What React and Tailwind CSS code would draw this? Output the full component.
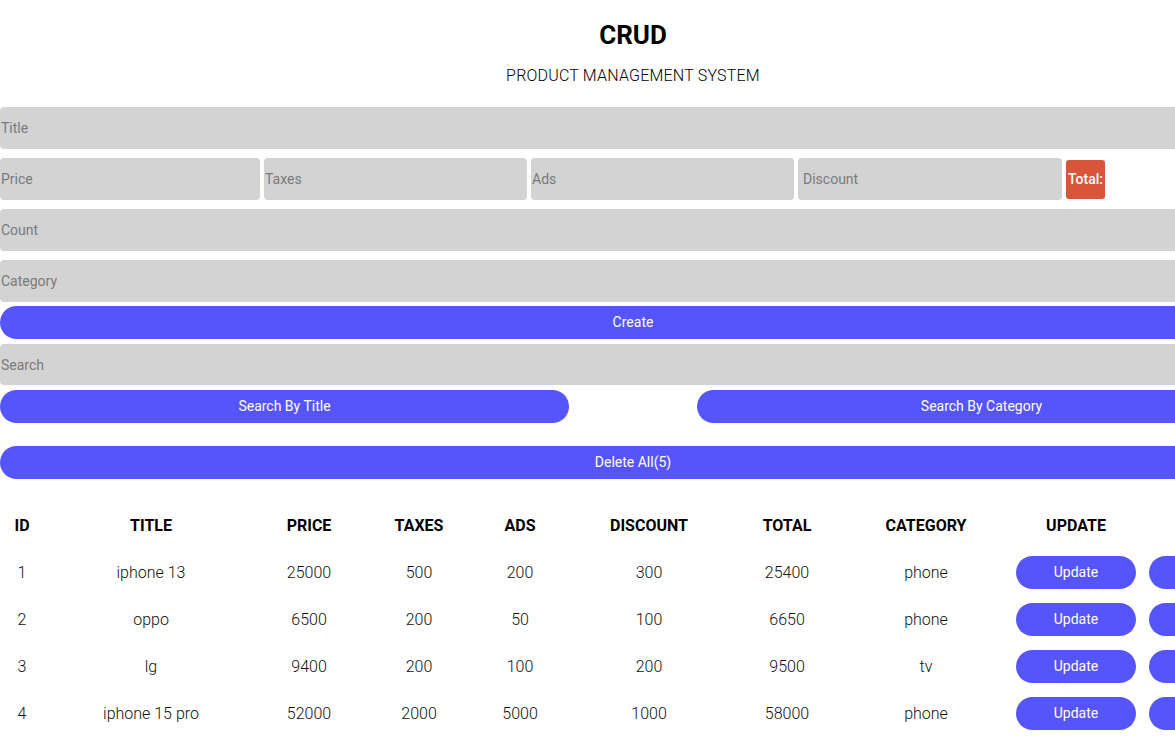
import React from 'react';

const products = [
  {id: 1, title: 'iphone 13', price: 25000, taxes: 500, ads: 200, discount: 300, total: 25400, category: 'phone'},
  {id: 2, title: 'oppo', price: 6500, taxes: 200, ads: 50, discount: 100, total: 6650, category: 'phone'},
  {id: 3, title: 'lg', price: 9400, taxes: 200, ads: 100, discount: 200, total: 9500, category: 'tv'},
  {id: 4, title: 'iphone 15 pro', price: 52000, taxes: 2000, ads: 5000, discount: 1000, total: 58000, category: 'phone'},
];

const inputCls =
  'block w-full h-[42px] bg-[#d3d3d3] rounded-[4px] px-[1px] text-[14px] outline-none placeholder:text-[#7a7a7a] text-[#222]';
const btnCls = 'block w-full h-[33px] rounded-full bg-[#5555fb] text-white text-[14px]';

export default function App() {
  return (
    <div className="w-[1175px] h-[751px] overflow-hidden bg-white">
      <div className="w-[1266px]" style={{fontFamily: 'Roboto, "Noto Sans", sans-serif'}}>
        <div className="text-center pt-[21px]">
          <h2 className="text-[26px] leading-[28px] font-bold text-black">CRUD</h2>
          <p className="mt-[17px] text-[16px] leading-[20px] font-light text-black tracking-[0.2px]">
            PRODUCT MANAGEMENT SYSTEM
          </p>
        </div>

        <div className="mt-[21px]">
          <input className={inputCls + ' mb-[9px]'} placeholder="Title" />
          <div className="flex items-center gap-[4px] mb-[9px]">
            <input className={inputCls + ' !w-[260px]'} placeholder="Price" />
            <input className={inputCls + ' !w-[263px]'} placeholder="Taxes" />
            <input className={inputCls + ' !w-[263px]'} placeholder="Ads" />
            <input className={inputCls + ' !w-[264px] !px-[5px]'} placeholder="Discount" />
            <div className="h-[39px] px-[2px] rounded-[3px] bg-[#d9553a] text-white text-[14px] font-medium flex items-center">
              Total:
            </div>
          </div>
          <input className={inputCls + ' mb-[9px]'} placeholder="Count" />
          <input className={inputCls} placeholder="Category" />
          <button className={btnCls + ' mt-[4px]'}>Create</button>
        </div>

        <div className="mt-[5px]">
          <input className={inputCls + ' !h-[41px]'} placeholder="Search" />
          <div className="flex justify-between mt-[5px]">
            <button className={btnCls + ' !w-[569px]'}>Search By Title</button>
            <button className={btnCls + ' !w-[569px]'}>Search By Category</button>
          </div>
        </div>

        <button className={btnCls + ' mt-[23px]'}>Delete All(5)</button>

        <table className="mt-[23px] w-[1280px] table-fixed text-center">
          <colgroup>
            <col className="w-[44px]" />
            <col className="w-[214px]" />
            <col className="w-[102px]" />
            <col className="w-[118px]" />
            <col className="w-[84px]" />
            <col className="w-[174px]" />
            <col className="w-[102px]" />
            <col className="w-[176px]" />
            <col className="w-[124px]" />
            <col className="w-[142px]" />
          </colgroup>
          <thead>
            <tr className="h-[47px] text-[16px] font-bold text-black">
              <th>ID</th>
              <th>TITLE</th>
              <th>PRICE</th>
              <th>TAXES</th>
              <th>ADS</th>
              <th>DISCOUNT</th>
              <th>TOTAL</th>
              <th>CATEGORY</th>
              <th>UPDATE</th>
              <th>DELETE</th>
            </tr>
          </thead>
          <tbody>
            {products.map((p) => (
              <tr key={p.id} className="h-[47px] text-[16px] font-light text-[#111]">
                <td>{p.id}</td>
                <td>{p.title}</td>
                <td>{p.price}</td>
                <td>{p.taxes}</td>
                <td>{p.ads}</td>
                <td>{p.discount}</td>
                <td>{p.total}</td>
                <td>{p.category}</td>
                <td>
                  <button className="mx-auto block w-[120px] h-[33px] rounded-full bg-[#5555fb] text-white text-[14px] font-normal">
                    Update
                  </button>
                </td>
                <td className="text-left pl-[11px]">
                  <button className="block w-[120px] h-[33px] rounded-full bg-[#5555fb] text-white text-[14px] font-normal">
                    Delete
                  </button>
                </td>
              </tr>
            ))}
          </tbody>
        </table>
      </div>
    </div>
  );
}
